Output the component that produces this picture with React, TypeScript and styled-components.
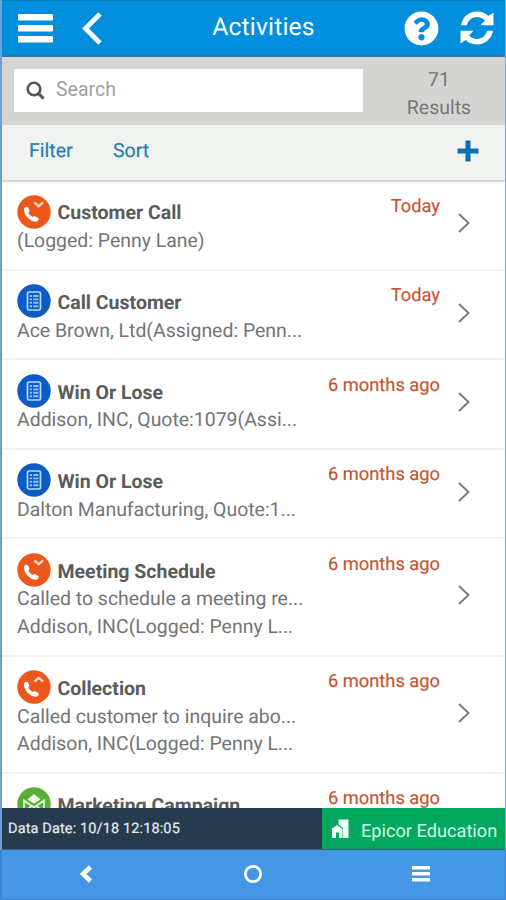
import React from 'react';
import styled, { createGlobalStyle } from 'styled-components';
import { FaQuestionCircle } from 'react-icons/fa';

const GlobalStyle = createGlobalStyle`
  * { box-sizing: border-box; }
  body { margin: 0; font-family: Roboto, sans-serif; text-rendering: geometricPrecision; }
  svg { display: block; flex: none; }
`;

const Screen = styled.div`
  width: 506px;
  height: 900px;
  display: flex;
  flex-direction: column;
  overflow: hidden;
  background: #4596e5;
`;

const AppFrame = styled.div`
  flex: none;
  height: 850px;
  display: flex;
  flex-direction: column;
  border-left: 2px solid #6f9fdb;
  border-right: 1px solid #78aae4;
  background: #fff;
`;

const Header = styled.header`
  flex: none;
  height: 57px;
  display: grid;
  grid-template-columns: 76px 54px 1fr 54px 56px;
  align-items: center;
  background: #008edd;
  border-top: 1px solid #0879b9;
  border-bottom: 2px solid #2d79a6;
  color: #fff;
`;

const Title = styled.h1`
  margin: 0;
  text-align: center;
  font-size: 24.7px;
  line-height: 30px;
  font-weight: 400;
  letter-spacing: 0.15px;
`;

const HeaderButton = styled.button<{ $inset: number }>`
  all: unset;
  box-sizing: border-box;
  padding-left: ${(p) => p.$inset}px;
`;

const SearchBar = styled.div`
  flex: none;
  height: 68px;
  display: flex;
  background: #d4d5d3;
  padding: 12px 0 0 12px;
`;

const SearchField = styled.label`
  width: 349px;
  height: 43px;
  display: flex;
  align-items: center;
  gap: 11px;
  padding-left: 12px;
  background: #fff;
`;

const SearchInput = styled.input`
  border: 0;
  padding: 0 0 2px;
  outline: 0;
  width: 280px;
  background: none;
  font: 400 19.5px/26px Roboto, sans-serif;
  &::placeholder { color: #a0a0a0; opacity: 1; }
`;

const Results = styled.div`
  flex: 1;
  margin-top: -3px;
  padding-left: 10px;
  text-align: center;
  color: #747675;
  font-size: 19.5px;
  line-height: 27.6px;
`;

const Toolbar = styled.div`
  flex: none;
  height: 56px;
  display: flex;
  align-items: center;
  gap: 40px;
  padding: 0 26px 3px 27px;
  background: #f0f3f0;
  border-bottom: 1px solid #cfd1cf;
  box-shadow: 0 1px 2px rgba(0, 0, 0, 0.18);
  position: relative;
`;

const ToolLink = styled.a<{ $width: number }>`
  width: ${(p) => p.$width}px;
  white-space: nowrap;
  color: #2381b2;
  font-size: 19.5px;
  line-height: 26px;
  -webkit-text-stroke: 0.2px currentColor;
`;

const AddButton = styled.button`
  all: unset;
  margin: 0 0 1px auto;
`;

const List = styled.main`
  flex: 1;
  min-height: 0;
  overflow: hidden;
`;

const Row = styled.article<{ $tall?: boolean }>`
  height: ${(p) => (p.$tall ? 117.2 : 89.6)}px;
  display: grid;
  grid-template-columns: 1fr 150px 64px;
  padding-left: 15px;
  border-bottom: 2px solid #f3f3f5;
  overflow: hidden;
`;

const RowBody = styled.div`
  padding-top: 14px;
  min-width: 0;
`;

const RowTitle = styled.h2`
  margin: 0;
  height: 33px;
  display: flex;
  align-items: center;
  gap: 6.5px;
  color: #5a5b5c;
  font-size: 19.5px;
  line-height: 33px;
  font-weight: 700;
  white-space: nowrap;
`;

const RowName = styled.span`
  padding-top: 2.8px;
`;

const RowText = styled.p`
  margin: 0;
  height: 27.7px;
  color: #737475;
  font-size: 19.45px;
  line-height: 27.7px;
  white-space: nowrap;
  &:first-of-type { margin-top: -1px; }
`;

const When = styled.time`
  padding: 11.5px 1px 0 0;
  text-align: right;
  white-space: nowrap;
  color: #c6532e;
  font-size: 18.3px;
  line-height: 28px;
  -webkit-text-stroke: 0.15px currentColor;
`;

const RowArrow = styled.div`
  display: flex;
  align-items: center;
  padding: 0 0 3px 16px;
`;

const StatusBar = styled.footer`
  flex: none;
  height: 42px;
  display: flex;
  background: #263b4f;
  border-bottom: 1px solid #2d6389;
`;

const DataDate = styled.div`
  width: 320px;
  padding-left: 6px;
  color: #e4ebef;
  font-size: 14.5px;
  line-height: 41px;
  letter-spacing: 0.13px;
  -webkit-text-stroke: 0.2px currentColor;
`;

const Company = styled.div`
  flex: 1;
  display: flex;
  align-items: center;
  gap: 12px;
  padding-left: 10px;
  background: #03a85f;
  color: #d9f8e8;
  font-size: 18.2px;
  white-space: nowrap;
`;

const CompanyName = styled.span`
  padding-top: 5px;
`;

const NavBar = styled.nav`
  flex: 1;
  display: grid;
  grid-template-columns: repeat(3, 1fr);
  place-items: center;
  padding-bottom: 2px;
  border: solid #3b84d4;
  border-width: 0 1px 1px 2px;
`;

type Kind = 'in' | 'out' | 'task' | 'mail';

const Badge = ({ kind }: { kind: Kind }) => (
  <svg width="34" height="34" viewBox="0 0 34 34" fill="none">
    <circle cx="17" cy="17" r="16.7" fill={kind === 'task' ? '#0d5bc4' : kind === 'mail' ? '#58ae36' : '#ec581b'} />
    {(kind === 'in' || kind === 'out') && (
      <>
        <path
          d="M7.300 12.800q1.500-1.300 3.600-.8l1.500 3.600q.3 1-1.100 2.200 1.500 3 4.300 4.300 1.700-1.300 2.600-.9l3.500 2.100q.4 2.600-1.600 3.200-4.300 1.200-8.900-3.200-5.400-5.400-3.900-10.500Z"
          fill="#fff"
        />
        <path d={kind === 'in' ? 'm17.3 7.400 4.400 3.800 4.400-3.800' : 'm17.3 11.600 4.400-3.800 4.400 3.800'} stroke="#ffd9c8" strokeWidth="2.300" />
      </>
    )}
    {kind === 'task' && (
      <>
        <rect x="10.500" y="8" width="13" height="18" rx="1.500" stroke="#b5dcfa" strokeWidth="1.700" />
        <path d="M12.800 12h2.200m1.200 0h5.200m-8.600 3.400h2.200m1.200 0h5.200m-8.600 3.400h2.200m1.200 0h5.200m-8.600 3.400h2.200m1.200 0h5.200" stroke="#8fc2ef" strokeWidth="1.900" />
      </>
    )}
    {kind === 'mail' && (
      <>
        <path d="M10.500 12.500 17 7l6.500 5.500L17 16.500Z" fill="#f0ffe9" />
        <path d="M7 13.500v12h20v-12l-10 7-10-7Zm0 12 7.500-6.500m12.500 6.500L19.500 19" stroke="#e2f8d9" strokeWidth="1.700" />
      </>
    )}
  </svg>
);

const rows: { kind: Kind; name: string; lines: string[]; when: string; tall?: boolean }[] = [
  { kind: 'in', name: 'Customer Call', lines: ['(Logged: Penny Lane)'], when: 'Today' },
  { kind: 'task', name: 'Call Customer', lines: ['Ace Brown, Ltd(Assigned: Penn...'], when: 'Today' },
  { kind: 'task', name: 'Win Or Lose', lines: ['Addison, INC, Quote:1079(Assi...'], when: '6 months ago' },
  { kind: 'task', name: 'Win Or Lose', lines: ['Dalton Manufacturing, Quote:1...'], when: '6 months ago' },
  { kind: 'in', name: 'Meeting Schedule', lines: ['Called to schedule a meeting re...', 'Addison, INC(Logged: Penny L...'], when: '6 months ago', tall: true },
  { kind: 'out', name: 'Collection', lines: ['Called customer to inquire abo...', 'Addison, INC(Logged: Penny L...'], when: '6 months ago', tall: true },
  { kind: 'mail', name: 'Marketing Campaign', lines: [], when: '6 months ago', tall: true },
];

export default function App() {
  return (
    <>
      <GlobalStyle />
      <Screen>
        <AppFrame>
          <Header>
            <HeaderButton $inset={16} aria-label="Menu">
              <svg width="35" height="30" viewBox="0 0 35 30" fill="#fff">
                <rect width="35" height="6.500" y="1" rx="1" />
                <rect width="35" height="6.500" y="12" rx="1" />
                <rect width="35" height="6.500" y="23" rx="1" />
              </svg>
            </HeaderButton>
            <HeaderButton $inset={2} aria-label="Back">
              <svg width="24" height="34" viewBox="0 0 24 34" fill="none" stroke="#fff" strokeWidth="4.800">
                <path d="M20 3 5.500 17.500 20 32" strokeLinejoin="miter" />
              </svg>
            </HeaderButton>
            <Title>Activities</Title>
            <HeaderButton $inset={9} aria-label="Help">
              <FaQuestionCircle size={35} />
            </HeaderButton>
            <HeaderButton $inset={11} aria-label="Refresh">
              <svg width="34" height="34" viewBox="0 0 34 34" fill="#fff">
                <path d="M1 14.200C2.300 6.200 8.700.500 17 .500c4.600 0 8.300 1.500 11.300 4.400L33.500 1.500v12.700H20.600l4.300-4.700C22.800 7.300 20.200 6.100 17 6.100c-4.900 0-8.700 3-10.100 8.100Z" />
                <path d="M33 19.800C31.700 27.800 25.300 33.500 17 33.500c-4.600 0-8.300-1.500-11.300-4.400L.5 32.500V19.800h12.900l-4.300 4.700c2.100 2.200 4.700 3.400 7.900 3.400 4.900 0 8.700-3 10.100-8.100Z" />
              </svg>
            </HeaderButton>
          </Header>
          <SearchBar>
            <SearchField>
              <svg width="19" height="19" viewBox="0 0 19 19" fill="none" stroke="#555" strokeWidth="2.600">
                <circle cx="8" cy="8" r="6.300" />
                <path d="m12.400 12.400 5.200 5.200" strokeWidth="3" />
              </svg>
              <SearchInput placeholder="Search" />
            </SearchField>
            <Results>71<br />Results</Results>
          </SearchBar>
          <Toolbar>
            <ToolLink $width={44}>Filter</ToolLink>
            <ToolLink $width={40}>Sort</ToolLink>
            <AddButton aria-label="Add">
              <svg width="22" height="22" viewBox="0 0 22 22" stroke="#0671ad">
                <path d="M11 3v16M3 11h16" strokeLinecap="square" strokeWidth="5" />
              </svg>
            </AddButton>
          </Toolbar>
          <List>
            {rows.map((row, i) => (
              <Row key={i} $tall={row.tall}>
                <RowBody>
                  <RowTitle>
                    <Badge kind={row.kind} />
                    <RowName>{row.name}</RowName>
                  </RowTitle>
                  {row.lines.map((line) => <RowText key={line}>{line}</RowText>)}
                </RowBody>
                <When>{row.when}</When>
                <RowArrow>
                  <svg width="14" height="22" viewBox="0 0 14 22" fill="none" stroke="#777" strokeWidth="1.800">
                    <path d="m2 2 9.500 9L2 20" />
                  </svg>
                </RowArrow>
              </Row>
            ))}
          </List>
          <StatusBar>
            <DataDate>Data Date: 10/18 12:18:05</DataDate>
            <Company>
              <svg width="17" height="20" viewBox="0 0 17 20" fill="#effff6">
                <path d="M6.500.500h10v18.500H11V9L6.500 5.500ZM0 9.500l5-3.500 5.500 4v9H7v-5.500H4V19H0Z" />
              </svg>
              <CompanyName>Epicor Education</CompanyName>
            </Company>
          </StatusBar>
        </AppFrame>
        <NavBar>
          <svg width="14" height="18" viewBox="0 0 14 18" fill="none" stroke="#fff" strokeWidth="4.500">
            <path d="M11.500 2 4 9l7.500 7" />
          </svg>
          <svg width="20" height="20" viewBox="0 0 20 20" fill="none" stroke="#fff" strokeWidth="2.800">
            <circle cx="10" cy="10" r="7.700" />
          </svg>
          <svg width="18" height="16" viewBox="0 0 18 16" fill="#fff">
            <path d="M0 0h18v3.500H0Zm0 6h18v3.500H0Zm0 6h18v3.500H0Z" />
          </svg>
        </NavBar>
      </Screen>
    </>
  );
}
